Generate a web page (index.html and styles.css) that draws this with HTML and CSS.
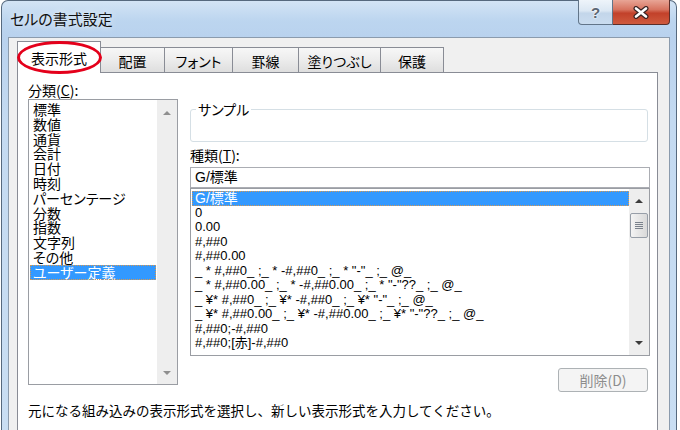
FILE: index.html
```html
<!DOCTYPE html>
<html lang="ja">
<head>
<meta charset="utf-8">
<title>セルの書式設定</title>
<link rel="stylesheet" href="styles.css">
</head>
<body>
<div class="window">
  <div class="titlebar">
    <div class="title">セルの書式設定</div>
    <div class="caption-buttons">
      <div class="cap-btn help">?</div>
      <div class="cap-btn close">
        <svg width="18" height="13" viewBox="0 0 18 13"><path d="M4 2.5L14 10.5M14 2.5L4 10.5" stroke="#3a2424" stroke-width="5" stroke-linecap="round"/><path d="M4 2.5L14 10.5M14 2.5L4 10.5" stroke="#ffffff" stroke-width="2.6" stroke-linecap="round"/></svg>
      </div>
    </div>
  </div>
  <div class="client">
    <div class="tabs">
      <div class="tab active">表示形式<span class="mark"></span></div>
      <div class="tab t2">配置</div>
      <div class="tab t3">フォント</div>
      <div class="tab t4">罫線</div>
      <div class="tab t5">塗りつぶし</div>
      <div class="tab t6">保護</div>
    </div>
    <div class="panel">
      <div class="col-left">
        <div class="label">分類(<span class="u">C</span>):</div>
        <div class="listbox cat">
          <ul class="items">
            <li>標準</li>
            <li>数値</li>
            <li>通貨</li>
            <li>会計</li>
            <li>日付</li>
            <li>時刻</li>
            <li>パーセンテージ</li>
            <li>分数</li>
            <li>指数</li>
            <li>文字列</li>
            <li>その他</li>
            <li class="sel">ユーザー定義</li>
          </ul>
          <div class="vscroll light">
            <div class="sb-btn up-cat"><svg width="8" height="4" viewBox="0 0 8 4"><path d="M0 4L4 0L8 4Z" fill="#8f8f8f"/></svg></div>
            <div class="sb-space"></div>
            <div class="sb-btn down-cat"><svg width="8" height="4" viewBox="0 0 8 4"><path d="M0 0L4 4L8 0Z" fill="#8f8f8f"/></svg></div>
          </div>
        </div>
      </div>
      <div class="col-right">
        <fieldset class="sample">
          <legend>サンプル</legend>
          <div class="sample-body"></div>
        </fieldset>
        <div class="label kind">種類(<span class="u">T</span>):</div>
        <div class="textbox">G/標準</div>
        <div class="listbox fmt">
          <ul class="items">
            <li class="sel">G/標準</li>
            <li>0</li>
            <li>0.00</li>
            <li>#,##0</li>
            <li>#,##0.00</li>
            <li>_ * #,##0_ ;_ * -#,##0_ ;_ * "-"_ ;_ @_ </li>
            <li>_ * #,##0.00_ ;_ * -#,##0.00_ ;_ * "-"??_ ;_ @_ </li>
            <li>_ ¥* #,##0_ ;_ ¥* -#,##0_ ;_ ¥* "-"_ ;_ @_ </li>
            <li>_ ¥* #,##0.00_ ;_ ¥* -#,##0.00_ ;_ ¥* "-"??_ ;_ @_ </li>
            <li>#,##0;-#,##0</li>
            <li>#,##0;[赤]-#,##0</li>
          </ul>
          <div class="vscroll">
            <div class="sb-btn up-fmt"><svg width="8" height="4" viewBox="0 0 8 4"><path d="M0 4L4 0L8 4Z" fill="#3c3c3c"/></svg></div>
            <div class="thumb">
              <svg width="8" height="8" viewBox="0 0 8 8"><path d="M0 0.5H8M0 2.5H8M0 4.5H8M0 6.5H8" stroke="#7a828c" stroke-width="1"/></svg>
            </div>
            <div class="sb-space"></div>
            <div class="sb-btn down-fmt"><svg width="8" height="4" viewBox="0 0 8 4"><path d="M0 0L4 4L8 0Z" fill="#3c3c3c"/></svg></div>
          </div>
        </div>
        <div class="btn-row">
          <div class="btn disabled">削除(D)</div>
        </div>
      </div>
      <div class="hint">元になる組み込みの表示形式を選択し、新しい表示形式を入力してください。</div>
    </div>
  </div>
</div>
</body>
</html>
```

FILE: styles.css
```css
* {
  box-sizing: border-box;
}

html, body {
  margin: 0;
  padding: 0;
  overflow: hidden;
}

body {
  width: 680px;
  height: 430px;
  background: #ffffff;
  font-family: "Noto Sans CJK JP", sans-serif;
  font-size: 14px;
  color: #000000;
  font-feature-settings: "palt";
}

.window {
  margin-left: 1px;
  width: 676px;
  height: 440px;
  border: 1px solid #56697e;
  border-bottom: none;
  border-radius: 7px 7px 0 0;
  background: linear-gradient(180deg, #d3e4f5 0, #bcd5ef 20px, #b9d2ee 36px, #c4daf1 120px, #c9def3 100%);
  padding: 0 6px;
}

.titlebar {
  height: 36px;
  display: flex;
  align-items: flex-start;
}

.title {
  padding: 8px 0 0 2px;
  font-size: 15px;
  line-height: 20px;
  color: #111111;
  text-shadow: 0 0 6px rgba(255, 255, 255, 0.9);
}

.caption-buttons {
  margin-left: auto;
  margin-top: -1px;
  display: flex;
}

.cap-btn {
  height: 25px;
  display: flex;
  align-items: center;
  justify-content: center;
}

.help {
  width: 35px;
  border: 1px solid #627589;
  border-top: none;
  border-radius: 0 0 0 4px;
  background: linear-gradient(180deg, #eef4fa 0, #dbe7f3 45%, #c3d6ea 55%, #cadcef 100%);
  font-family: "Liberation Sans", sans-serif;
  font-weight: bold;
  font-size: 15px;
  color: #5b6673;
  text-shadow: 0 0 2px #ffffff, 0 0 2px #ffffff;
}

.close {
  width: 57px;
  border: 1px solid #5a2e2a;
  border-left: none;
  border-top: none;
  border-radius: 0 0 4px 0;
  background: linear-gradient(180deg, #e8a596 0, #d7735f 40%, #c2412a 55%, #cf5a3e 100%);
}

.client {
  height: 403px;
  border: 1px solid #8b9bad;
  background: #f0f0f0;
  padding: 3px 0 0 8px;
}

.tabs {
  position: relative;
  z-index: 1;
  display: flex;
  align-items: flex-start;
  height: 32px;
  margin-bottom: -1px;
}

.tab {
  height: 25px;
  margin-top: 6px;
  margin-left: -1px;
  border: 1px solid #898c95;
  border-bottom: none;
  background: linear-gradient(180deg, #f7f7f7 0, #ececec 50%, #dedede 100%);
  display: flex;
  align-items: center;
  justify-content: center;
  font-size: 14px;
  line-height: 16px;
  padding-top: 1px;
}

.tab.active {
  position: relative;
  margin-left: 0;
  margin-top: 0;
  height: 32px;
  width: 84px;
  background: #ffffff;
  padding-top: 0;
}

.mark {
  position: absolute;
  left: -1px;
  top: -1px;
  width: 85px;
  height: 33px;
  border: 3px solid #e4001b;
  border-radius: 50%;
}

.t2 { width: 65px; }
.t3 { width: 69px; }
.t4 { width: 67px; }
.t5 { width: 83px; }
.t6 { width: 64px; }

.panel {
  width: 641px;
  height: 362px;
  border: 1px solid #898c95;
  background: #ffffff;
  padding: 9px 0 0 10px;
  display: grid;
  grid-template-columns: 150px 460px;
  column-gap: 12px;
  align-content: start;
}

.label {
  line-height: 16px;
  height: 16px;
}

.u {
  text-decoration: underline;
}

.listbox {
  display: flex;
  border: 1px solid #9a9da3;
  background: #ffffff;
}

.listbox.cat {
  margin-top: 1px;
  height: 286px;
}

.items {
  flex: 1;
  min-width: 0;
  list-style: none;
  margin: 0;
  overflow: hidden;
}

.cat .items {
  padding: 2px 0 0 0;
  line-height: 14.8px;
}

.cat .items li {
  margin: 0 1px;
  padding-left: 3px;
  height: 14.8px;
  white-space: nowrap;
}

.items li.sel {
  background: #3399ff;
  color: #ffffff;
  outline: 1px dotted #d89850;
  outline-offset: -1px;
}

.vscroll {
  width: 20px;
  display: flex;
  flex-direction: column;
  background: #eeeeee;
}

.sb-btn {
  display: flex;
  align-items: center;
  justify-content: center;
}

.up-cat { height: 26px; }
.down-cat { height: 22px; }
.up-fmt { height: 24px; }
.down-fmt { height: 24px; }

.sb-space {
  flex: 1;
}

.thumb {
  height: 25px;
  margin: 0 1px 0 1px;
  border: 1px solid #979ea8;
  border-radius: 2px;
  background: linear-gradient(90deg, #f4f4f4 0, #e6e6e6 50%, #d9d9d9 100%);
  display: flex;
  align-items: center;
  justify-content: center;
}

.sample {
  margin: 19px 2px 0 0;
  padding: 0 6px 0 5px;
  border: 1px solid #d5dfe5;
  border-radius: 3px;
  min-width: 0;
}

.sample legend {
  padding: 0 2px;
  line-height: 16px;
  font-size: 14px;
}

.sample-body {
  height: 24px;
}

.kind {
  margin-top: 5px;
}

.textbox {
  margin-top: 4px;
  height: 21px;
  border: 1px solid #abadb3;
  padding-left: 4px;
  line-height: 19px;
  font-family: "Liberation Sans", "Noto Sans CJK JP", sans-serif;
  font-size: 14px;
}

.listbox.fmt {
  height: 168px;
}

.fmt .items {
  padding: 2px 0 0 0;
  font-family: "Liberation Sans", "Noto Sans CJK JP", sans-serif;
  font-size: 13px;
  line-height: 14.5px;
}

.fmt .items li {
  margin: 0 0 0 1px;
  padding-left: 3px;
  white-space: pre;
  height: 14.5px;
}

.fmt .items li.sel {
  font-size: 14px;
}

.btn-row {
  display: flex;
  justify-content: flex-end;
  margin-top: 12px;
  padding-right: 2px;
}

.btn {
  width: 90px;
  height: 24px;
  border: 1px solid #adb2b5;
  border-radius: 3px;
  background: #f4f4f4;
  display: flex;
  align-items: center;
  justify-content: center;
  line-height: 16px;
}

.btn.disabled {
  color: #8d8d8d;
}

.hint {
  grid-column: 1 / -1;
  margin-top: 9px;
  line-height: 18px;
  white-space: nowrap;
  font-feature-settings: normal;
  font-size: 13.5px;
}
```
